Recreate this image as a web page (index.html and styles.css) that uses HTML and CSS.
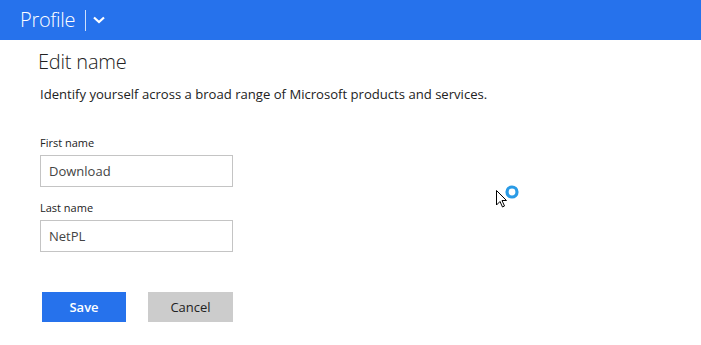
FILE: index.html
```html
<!DOCTYPE html>
<html>
<head>
<meta charset="utf-8">
<link rel="stylesheet" href="styles.css">
</head>
<body>
<header class="topbar">
  <span class="title">Profile</span>
  <span class="divider"></span>
  <svg class="chevron" width="12" height="8" viewBox="0 0 12 8"><path d="M1 1.5 L6 6 L11 1.5" fill="none" stroke="#fff" stroke-width="2.2"/></svg>
</header>
<main class="content">
  <h1 class="heading">Edit name</h1>
  <p class="desc">Identify yourself across a broad range of Microsoft products and services.</p>
  <form class="form">
    <label class="label">First name</label>
    <input class="field" type="text" value="Download">
    <label class="label">Last name</label>
    <input class="field" type="text" value="NetPL">
    <div class="actions">
      <button type="button" class="btn save">Save</button>
      <button type="button" class="btn cancel">Cancel</button>
    </div>
  </form>
</main>
<svg class="cursor" width="28" height="30" viewBox="0 0 28 30">
  <circle cx="17" cy="8" r="5" fill="none" stroke="#2a9be6" stroke-width="3.2"/>
  <path d="M1.5 6.5 L1.5 21 L5 17.5 L7.5 23 L9.5 22 L7 16.5 L11.5 16.5 Z" fill="#fff" stroke="#000" stroke-width="1" stroke-linejoin="round"/>
</svg>
</body>
</html>
```
FILE: styles.css
```css
html, body { margin: 0; padding: 0; background: #fff; }
body { font-family: "Open Sans", "Noto Sans", sans-serif; color: #222; width: 701px; height: 345px; overflow: hidden; position: relative; }
.topbar { height: 40px; background: #2672ec; display: flex; align-items: center; padding-left: 20px; box-sizing: border-box; }
.title { color: #fff; font-size: 20px; font-weight: 300; letter-spacing: -0.3px; line-height: 40px; }
.divider { width: 1px; height: 21px; background: #cfe0fb; margin-left: 10px; margin-right: 7px; }
.chevron { display: block; }
.content { padding-left: 38px; }
.heading { margin: 10px 0 0 0; font-size: 20px; font-weight: 300; line-height: 24px; color: #222; letter-spacing: -0.2px; }
.desc { margin: 12px 0 0 2px; font-size: 13.1px; line-height: 16px; color: #222; }
.form { display: flex; flex-direction: column; align-items: flex-start; margin: 34px 0 0 2px; }
.label { font-size: 11px; line-height: 14px; color: #222; }
.field { width: 193px; height: 32px; box-sizing: border-box; border: 1px solid #c4c4c4; margin: 5px 0 14px 0; padding: 0 0 0 8px; font-family: inherit; font-size: 13px; color: #444; outline: none; }
.actions { display: flex; gap: 22px; margin: 26px 0 0 2px; }
.btn { height: 30px; border: none; font-family: inherit; font-size: 13px; padding: 0; }
.save { width: 84px; background: #2672ec; color: #fff; font-weight: 600; }
.cancel { width: 85px; background: #cccccc; color: #222; }
.cursor { position: absolute; left: 495px; top: 184px; }
```
